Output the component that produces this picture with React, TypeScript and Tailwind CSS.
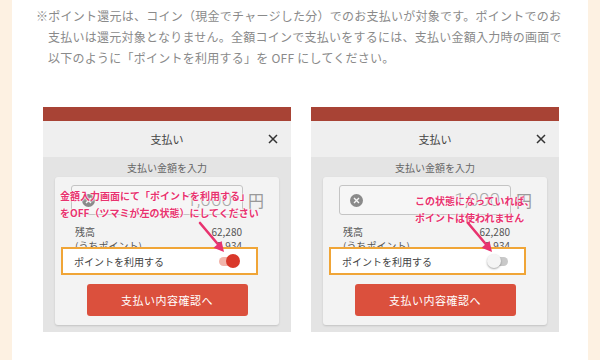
import React from "react";

const font = "font-['Noto_Sans_CJK_JP','Noto_Sans',sans-serif]";

function Toggle({ on }: { on: boolean }) {
  return (
    <div className="relative w-[21px] h-[14px] mr-[16px]">
      {on ? (
        <>
          <div className="absolute left-0 top-[3px] w-[18px] h-[9px] rounded-full bg-[#f2b5ab]" />
          <div className="absolute right-0 top-0 w-[14px] h-[14px] rounded-full bg-[#d9382a]" />
        </>
      ) : (
        <>
          <div className="absolute right-0 top-[3px] w-[18px] h-[9px] rounded-full bg-[#c9c9c9]" />
          <div className="absolute left-0 top-0 w-[14px] h-[14px] rounded-full bg-[#f4f4f4] shadow-[0_1px_2px_rgba(0,0,0,0.35)]" />
        </>
      )}
    </div>
  );
}

function Shot({ on, note, noteLeft, noteTop }: { on: boolean; note: string[]; noteLeft: number; noteTop: number }) {
  return (
    <div className="relative w-[248px] flex flex-col">
      <div className="h-[14px] bg-[#a84335]" />
      <div className="relative h-[36px] bg-[#efefef] flex items-center justify-center text-[11px] text-[#444]">
        支払い
        <svg className="absolute right-[13px] top-[13px]" width="10" height="10" viewBox="0 0 10 10">
          <path d="M1 1L9 9M9 1L1 9" stroke="#333" strokeWidth="1.5" />
        </svg>
      </div>
      <div className="bg-[#e4e4e4] px-[12px] pb-[7px]">
        <div className="h-[20px] flex items-center justify-center text-[10px] text-[#666]">支払い金額を入力</div>
        <div className="h-[148px] bg-[#f3f3f3] rounded-[3px] shadow-[0_1px_2px_rgba(0,0,0,0.15)] pt-[8px] flex flex-col">
          <div className="flex items-center ml-[16px]">
            <div className="w-[172px] h-[30px] border border-[#c4c4c4] rounded-[3px] bg-[#f6f6f6] flex items-center pl-[10px] pr-[10px]">
              <div className="w-[13px] h-[13px] rounded-full bg-[#8a8a8a] flex items-center justify-center">
                <svg width="7" height="7" viewBox="0 0 7 7">
                  <path d="M1 1L6 6M6 1L1 6" stroke="#f6f6f6" strokeWidth="1.4" />
                </svg>
              </div>
              <span className="ml-auto text-[19px] font-light text-[#a8a8a8] font-['Roboto',sans-serif]">1,000</span>
            </div>
            <span className="ml-[5px] text-[16px] text-[#999]">円</span>
          </div>
          <div className="mt-[10px] pl-[20px] pr-[37px] text-[10px] leading-[14px] text-[#555]">
            <div className="flex justify-between">
              <span>残高</span>
              <span>62,280</span>
            </div>
            <div className="flex justify-between">
              <span>(うちポイント)</span>
              <span>5,934</span>
            </div>
          </div>
          <div className="relative -mt-[6px] ml-[6px] w-[197px] h-[28px] border-2 border-[#f0a537] bg-white flex items-center justify-between pl-[11px] text-[10px] text-[#444]">
            <span>ポイントを利用する</span>
            <Toggle on={on} />
          </div>
          <div className="mt-[9px] mx-auto w-[161px] h-[32px] rounded-[3px] bg-[#db503d] flex items-center justify-center text-[11px] text-white tracking-[0.5px]">
            支払い内容確認へ
          </div>
        </div>
      </div>
      <div
        className="absolute font-bold text-[10px] leading-[17px] text-[#e8336f] [text-shadow:0_0_2px_#fff,0_0_2px_#fff,0_0_1px_#fff] whitespace-nowrap"
        style={{ left: noteLeft, top: noteTop }}
      >
        {note.map((l, i) => (
          <div key={i}>{l}</div>
        ))}
      </div>
      <svg className="absolute left-0 top-0 pointer-events-none" width="248" height="225" viewBox="0 0 248 225">
        <path d="M157 116 L176 138.5" stroke="#e8336f" strokeWidth="2.6" strokeLinecap="round" />
        <path d="M181 145 L170.5 140.8 L178.5 134 Z" fill="#e8336f" />
      </svg>
    </div>
  );
}

export default function App() {
  return (
    <div className={`w-[600px] h-[360px] bg-[#fdf1e2] px-[12px] ${font}`}>
      <div className="h-full bg-white pt-[5px]">
        <div className="pl-[24px] text-[12px] leading-[21px] tracking-[0.25px] text-[#8a8a8a] whitespace-nowrap">
          <div>※ポイント還元は、コイン（現金でチャージした分）でのお支払いが対象です。ポイントでのお</div>
          <div className="pl-[12px]">支払いは還元対象となりません。全額コインで支払いをするには、支払い金額入力時の画面で</div>
          <div className="pl-[12px]">以下のように「ポイントを利用する」を OFF にしてください。</div>
        </div>
        <div className="mt-[39px] pl-[31px] flex gap-[20px]">
          <Shot
            on={true}
            note={["金額入力画面にて「ポイントを利用する」", "をOFF（ツマミが左の状態）にしてください"]}
            noteLeft={17}
            noteTop={80}
          />
          <Shot on={false} note={["この状態になっていれば、", "ポイントは使われません"]} noteLeft={104} noteTop={85} />
        </div>
      </div>
    </div>
  );
}
